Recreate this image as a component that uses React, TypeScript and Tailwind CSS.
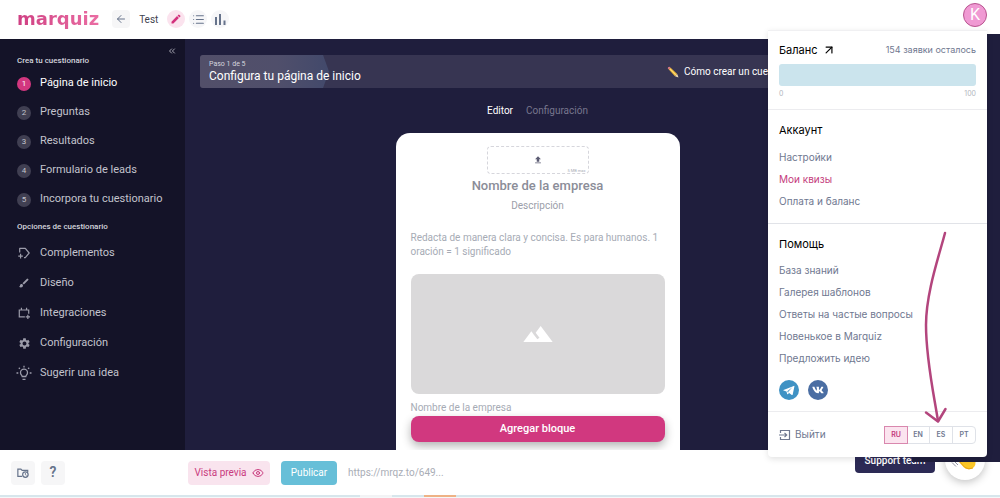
import React, { useState } from 'react';
import { ArrowLeft, List, ArrowUpRight, ChevronsLeft, Eye } from 'lucide-react';
import { FaVk } from 'react-icons/fa';
import { MdEdit, MdBrush, MdSettings, MdUpload, MdLandscape } from 'react-icons/md';

const steps = [
    'Página de inicio',
    'Preguntas',
    'Resultados',
    'Formulario de leads',
    'Incorpora tu cuestionario',
];

const accountLinks = ['Настройки', 'Мои квизы', 'Оплата и баланс'];

const helpLinks = [
    'База знаний',
    'Галерея шаблонов',
    'Ответы на частые вопросы',
    'Новенькое в Marquiz',
    'Предложить идею',
];

const languages = ['RU', 'EN', 'ES', 'PT'];

const TagIcon = () => (
    <svg viewBox="0 0 14 14" className="w-3 h-3" fill="none" stroke="currentColor" strokeWidth="1.4">
        <path d="M2 6.500V1.500h6.500L13 7l-4.500 5.500H7" strokeLinejoin="round" />
        <path d="M3 8v5.500M.3 10.700h5.400" />
    </svg>
);

const IntegrationIcon = () => (
    <svg viewBox="0 0 14 14" className="w-3 h-3" fill="none" stroke="currentColor" strokeWidth="1.4">
        <path d="M8 11.500H1.500v-8h11V8M4 1v2.500M10 1v2.500" />
        <path d="M11.500 9v5M9 11.500h5" />
    </svg>
);

const BulbIcon = () => (
    <svg viewBox="0 0 16 16" className="w-4 h-4 shrink-0" fill="none" stroke="currentColor" strokeWidth="1.3">
        <path d="M6.200 11.500c0-1.200-1.700-1.800-1.700-3.800a3.500 3.500 0 0 1 7 0c0 2-1.700 2.600-1.700 3.800zM6.500 14.300h3" />
        <path d="M8 .8v1.600M.5 8h1.800M13.700 8h1.800M2.800 2.800l1.100 1.100M13.200 2.800l-1.100 1.100" />
    </svg>
);

const BarsIcon = () => (
    <svg viewBox="0 0 12 12" className="w-3 h-3" fill="currentColor">
        <path d="M1 4h2v8H1zM5 1h2v11H5zM9.500 7.500h2V12h-2z" />
    </svg>
);

const FolderClockIcon = () => (
    <svg viewBox="0 0 14 12" className="w-3 h-3" fill="none" stroke="currentColor" strokeWidth="1.4">
        <path d="M6 10H1V1.500h3.500L6 3h6.500v2" />
        <circle cx="9.800" cy="7.800" r="3.200" />
        <path d="M9.800 6v2l1.400.8" strokeWidth="1" />
    </svg>
);

const ExitIcon = () => (
    <svg viewBox="0 0 12 12" className="w-3 h-3" fill="none" stroke="currentColor" strokeWidth="1.200">
        <path d="M1.500 4V1.500h9v9h-9V8M0 6h7.500M5.500 3.800 7.700 6 5.500 8.200" />
    </svg>
);

const PencilEmoji = () => (
    <svg viewBox="0 0 12 12" className="w-3 h-3">
        <path d="M1.800 3.600 3.600 1.800l6.600 6.200-2.200 2.200z" fill="#f2bd3f" />
        <path d="M2.700 2.700 9.100 9.100" stroke="#fbdc7a" strokeWidth=".9" />
        <path d="M.8 2.600Q.4.8 2.600.8l1 1L1.800 3.600z" fill="#d97b84" />
        <path d="M10.200 8 11.500 11.500 8 10.200z" fill="#f3dcb5" />
    </svg>
);

const WaveIcon = () => (
    <svg viewBox="0 0 40 40" className="w-10 h-10">
        <path
            d="M10 13q2-2 4 0l3 3-4-6q0-3 3-2l7 7-2-6q2-3 4 0l5 10q2 7-3 9.500-5 2-8-1l-9-10q-1-2 0-4.500z"
            fill="#fcc727"
        />
        <path d="M12 19l8 8.500q4 2.500 8 .5" stroke="#e9a315" strokeWidth="1" fill="none" />
        <path d="M8 20l5 5M7 22.500l4 4M10 19l3 3" stroke="#77778a" strokeWidth=".8" fill="none" />
    </svg>
);

const options = [
    { label: 'Complementos', icon: <TagIcon /> },
    { label: 'Diseño', icon: <MdBrush size={12} /> },
    { label: 'Integraciones', icon: <IntegrationIcon /> },
    { label: 'Configuración', icon: <MdSettings size={13} /> },
    { label: 'Sugerir una idea', icon: <BulbIcon /> },
];

const Header: React.FC = () => (
    <header className="flex h-[39px] shrink-0 items-center bg-white pb-px pl-[17px] text-[#66738b]">
        <a
            href="#"
            className="font-['DejaVu_Sans',sans-serif] text-[18px] leading-6 font-bold bg-gradient-to-r from-[#cf3f83] to-[#ea6da3] bg-clip-text text-transparent"
        >
            marquiz
        </a>
        <button aria-label="Volver" className="ml-[13px] flex h-[18px] w-[18px] items-center justify-center rounded bg-[#f6f6f7]">
            <ArrowLeft size={12} />
        </button>
        <span className="ml-[9px] w-7 text-[10px] text-[#3f4350]">Test</span>
        <div className="flex gap-1">
            <button aria-label="Editar" className="flex h-[18px] w-[18px] items-center justify-center rounded-full bg-[#fbe3ee] text-[#d3317d]">
                <MdEdit size={12} />
            </button>
            <button aria-label="Lista" className="flex h-[18px] w-[18px] items-center justify-center rounded-full bg-[#f6f6f8]">
                <List size={13} />
            </button>
            <button aria-label="Estadísticas" className="flex h-[18px] w-[18px] items-center justify-center rounded-full bg-[#f6f6f8]">
                <BarsIcon />
            </button>
        </div>
    </header>
);

const Sidebar: React.FC = () => (
    <aside className="relative w-[185px] shrink-0 bg-[#141328] pl-[17px] pt-[17px] text-[#c3c3cd]">
        <button aria-label="Contraer" className="absolute right-2 top-[7px]">
            <ChevronsLeft size={10} />
        </button>
        <h2 className="text-[8px] leading-[10px] font-medium text-[#d5d5de]">Crea tu cuestionario</h2>
        <nav className="mt-[3px] text-[11px]">
            {steps.map((step, i) => (
                <a key={step} href="#" className={`flex h-[29px] items-center gap-[9px] ${i === 0 ? 'text-white' : ''}`}>
                    <span
                        className={`flex h-[14px] w-[14px] items-center justify-center rounded-full text-[8px] ${
                            i === 0 ? 'bg-[#d2377f]' : 'bg-[#403f52]'
                        }`}
                    >
                        {i + 1}
                    </span>
                    {step}
                </a>
            ))}
        </nav>
        <h2 className="mt-2 text-[8px] leading-[10px] font-medium text-[#d5d5de]">Opciones de cuestionario</h2>
        <nav className="mt-[6px] text-[11px]">
            {options.map((option) => (
                <a key={option.label} href="#" className="flex h-[30px] items-center gap-[9px]">
                    <span className="flex w-[14px] shrink-0 justify-center text-[#9c9caa]">{option.icon}</span>
                    {option.label}
                </a>
            ))}
        </nav>
    </aside>
);

const Editor: React.FC = () => (
    <main className="min-w-0 flex-1 overflow-hidden pl-[15px] pr-[125px] pt-4">
        <div className="flex h-[33px] items-center justify-between rounded bg-[#373552] pr-[68px] text-white">
            <div className="relative h-full w-[130px] rounded-l pl-[9px] pt-1">
                <svg className="absolute inset-0 h-full w-full" viewBox="0 0 130 33" preserveAspectRatio="none">
                    <defs>
                        <linearGradient id="step">
                            <stop offset="0" stopColor="#524f69" />
                            <stop offset=".6" stopColor="#504f6b" />
                            <stop offset="1" stopColor="#42496b" />
                        </linearGradient>
                    </defs>
                    <path d="M3 0h120l6 16.500-6 16.500H3q-3 0-3-3V3q0-3 3-3z" fill="url(#step)" />
                </svg>
                <p className="relative text-[7px] leading-[10px] text-[#d5d5df]">Paso 1 de 5</p>
                <h1 className="relative whitespace-nowrap text-[12px] leading-[14px]">Configura tu página de inicio</h1>
            </div>
            <a href="#" className="flex items-center gap-[5px] whitespace-nowrap text-[10px]">
                <PencilEmoji />
                Cómo crear un cuestionario
            </a>
        </div>

        <div className="mt-4 flex justify-center gap-[13px] text-[10px] leading-[14px]">
            <button className="text-white">Editor</button>
            <button className="text-[#77768d]">Configuración</button>
        </div>

        <section className="mx-auto mt-[15px] w-[284px] rounded-t-[14px] bg-white px-[15px] pt-[13px] text-[#a6abb5]">
            <button
                aria-label="Subir logo"
                className="relative mx-auto flex h-7 w-[102px] items-center justify-center rounded-sm border border-dashed border-[#d6d6dc] text-[#5c5c73]"
            >
                <MdUpload size={10} />
                <span className="absolute bottom-0 right-0.5 text-[4px] leading-[5px] text-[#a6abb5]">5 MB max</span>
            </button>
            <h2 className="mt-1 text-center text-[13px] leading-4 font-medium text-[#8b8d98]">Nombre de la empresa</h2>
            <p className="mt-[5px] text-center text-[10px] leading-[14px] text-[#9b9ea9]">Descripción</p>
            <p className="mt-[18px] text-[10px] leading-[14px]">
                Redacta de manera clara y concisa. Es para humanos. 1 oración = 1 significado
            </p>
            <div className="mt-[15px] flex h-[120px] items-center justify-center rounded-lg bg-[#dad9da] text-white">
                <MdLandscape size={32} />
            </div>
            <p className="mt-[7px] text-[10px] leading-[14px]">Nombre de la empresa</p>
            <button className="mt-px h-[26px] w-full rounded-lg bg-[#d1387f] text-[11px] font-medium text-white shadow-[0_4px_10px_rgba(0,0,0,0.3)]">
                Agregar bloque
            </button>
            <div className="h-5" />
        </section>
    </main>
);

const BottomBar: React.FC = () => (
    <footer className="relative z-10 shrink-0 bg-white">
        <div className="flex h-[45px] items-center pl-[11px] text-[10px]">
            <div className="flex w-[177px] gap-[6px] text-[#66738b]">
                <button aria-label="Historial" className="flex h-6 w-6 items-center justify-center rounded bg-[#f6f6f7]">
                    <FolderClockIcon />
                </button>
                <button aria-label="Ayuda" className="h-6 w-6 rounded bg-[#f6f6f7] text-[14px] font-semibold">
                    ?
                </button>
            </div>
            <button className="flex h-6 w-[82px] items-center justify-center gap-[5px] rounded-sm bg-[#f9e4ee] text-[#c93b7e]">
                Vista previa
                <Eye size={12} />
            </button>
            <button className="ml-[11px] h-6 w-14 rounded-sm bg-[#67bfd8] text-white">Publicar</button>
            <a href="#" className="ml-[11px] text-[#a9adb6]">
                https://mrqz.to/649...
            </a>
        </div>
        <div className="flex h-0.5 bg-[#d7e6ec]">
            <span className="ml-[36%] w-8 bg-[#f2f3f5]" />
            <span className="ml-8 w-8 bg-[#eeb285]" />
        </div>
        <div className="h-px bg-[#f5f8f9]" />
    </footer>
);

const AccountMenu: React.FC = () => {
    const [lang, setLang] = useState('RU');

    return (
        <div className="absolute right-[13px] top-[30px] z-30 w-[219px] rounded-b-sm border-t border-[#f0f0f2] bg-white font-[Inter,sans-serif] text-[11px] text-[#6f7890] shadow-[0_2px_6px_rgba(0,0,0,0.12)]">
            <div className="border-b border-[#ececef] px-[11px] pb-[10px] pt-3">
                <div className="flex h-[14px] items-center justify-between">
                    <a href="#" className="flex items-center gap-1 text-black">
                        Баланс
                        <ArrowUpRight size={14} />
                    </a>
                    <span className="text-[9px]">154 заявки осталось</span>
                </div>
                <div className="mt-[7px] h-[22px] rounded-[3px] bg-[#cbe4ed]" />
                <div className="mt-[3px] flex justify-between text-[7px] leading-[10px] text-[#b3b6be]">
                    <span>0</span>
                    <span>100</span>
                </div>
            </div>

            <div className="border-b border-[#e1e3e8] px-[11px] pb-[11px] pt-3">
                <h3 className="mb-2 leading-4 text-black">Аккаунт</h3>
                {accountLinks.map((link) => (
                    <a key={link} href="#" className={`flex h-[22px] items-center text-[10px] ${link === 'Мои квизы' ? 'text-[#c43b7c]' : ''}`}>
                        {link}
                    </a>
                ))}
            </div>

            <div className="border-b border-[#ececef] px-[11px] pb-[11px] pt-3">
                <h3 className="mb-[7px] leading-4 text-black">Помощь</h3>
                {helpLinks.map((link) => (
                    <a key={link} href="#" className="flex h-[22px] items-center text-[10px]">
                        {link}
                    </a>
                ))}
                <div className="mt-[11px] flex gap-[9px] text-white">
                    <a href="#" aria-label="Telegram" className="flex h-5 w-5 items-center justify-center rounded-full bg-[#3f92c4]">
                        <svg viewBox="0 0 20 20" className="h-5 w-5" fill="currentColor">
                            <path d="M4.500 9.900 14.800 5.900q.7-.2.6.6l-1.700 8q-.2.8-.9.4l-2.700-2-1.400 1.300q-.4.4-.5-.3l-.7-2.500-2.900-.9q-.7-.2-.1-.6zM8.300 11.200l5-4-4 4.500-.2 1.300z" fillRule="evenodd" />
                        </svg>
                    </a>
                    <a href="#" aria-label="VK" className="flex h-5 w-5 items-center justify-center rounded-full bg-[#4b6ea3]">
                        <FaVk size={12} />
                    </a>
                </div>
            </div>

            <div className="flex h-[45px] items-center justify-between px-[11px]">
                <button className="flex items-center gap-1 text-[10px]">
                    <ExitIcon />
                    Выйти
                </button>
                <div className="flex w-[92px] rounded-sm border border-[#dfe2e8]">
                    {languages.map((code) => (
                        <button
                            key={code}
                            onClick={() => setLang(code)}
                            className={`h-4 flex-1 text-[7px] leading-4 font-semibold ${
                                code === lang
                                    ? 'bg-[#fbe4ef] text-[#c43b7c] outline outline-[#d987ae]'
                                    : 'border-r border-[#dfe2e8] last:border-r-0'
                            }`}
                        >
                            {code}
                        </button>
                    ))}
                </div>
            </div>
        </div>
    );
};

const App: React.FC = () => (
    <div className="relative flex h-screen flex-col overflow-hidden bg-white font-[Roboto,sans-serif]">
        <Header />
        <div className="flex min-h-0 flex-1 bg-[#1f1e3d]">
            <Sidebar />
            <Editor />
        </div>
        <BottomBar />

        {/* support widget */}
        <button className="absolute bottom-[25px] right-[65px] z-10 h-[26px] w-20 rounded bg-[#2c2a55] text-[10px] font-medium text-white">
            Support team
        </button>
        <button aria-label="Chat" className="absolute bottom-[18px] right-[15px] z-10 flex h-10 w-10 items-center justify-center rounded-full bg-white shadow-[0_2px_8px_rgba(0,0,0,0.25)]">
            <WaveIcon />
        </button>

        {/* backdrop around the open menu */}
        <div className="absolute right-0 top-[34px] bottom-9 z-20 w-[13px] bg-[#1f1e3d]" />
        <div className="absolute right-0 bottom-9 z-20 h-3 w-[88px] bg-[#1f1e3d]" />

        <AccountMenu />
        <button className="absolute right-[13px] top-[3px] z-30 h-6 w-6 rounded-full border border-[#b8548f] bg-[#f09ad3] text-[16px] leading-5 text-white">
            K
        </button>

        {/* pointer to the language switch */}
        <svg className="pointer-events-none absolute right-12 top-[228px] z-40 h-[200px] w-8" viewBox="0 0 32 200" fill="none" stroke="#b3457d" strokeWidth="2.500" strokeLinecap="round">
            <path d="M25 5C19 28 6 65 6 97c0 35 8 70 12 96" />
            <path d="M6 184.500 18 193.500 25.500 181" strokeLinejoin="round" />
        </svg>
    </div>
);

export default App;
